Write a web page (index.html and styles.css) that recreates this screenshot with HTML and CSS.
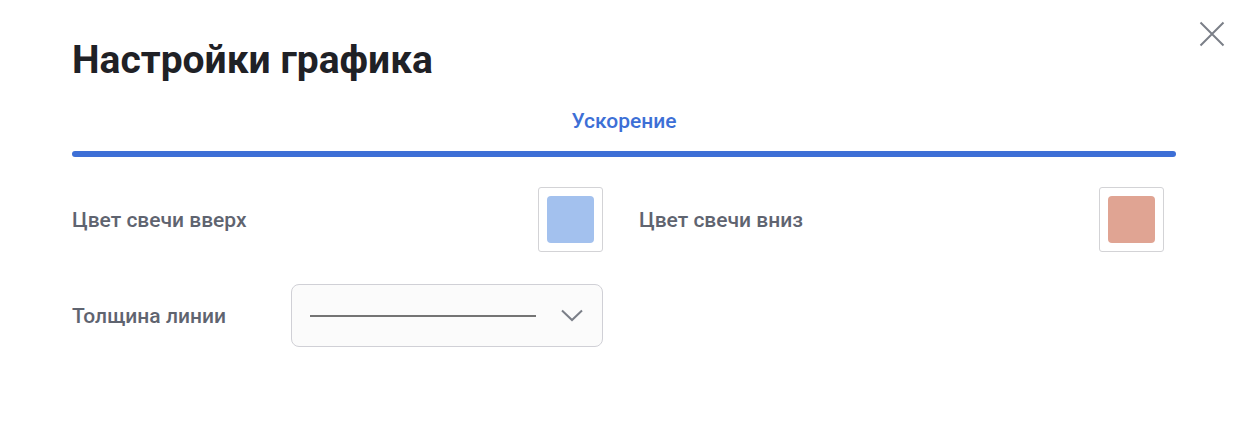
FILE: index.html
```html
<!DOCTYPE html>
<html lang="ru">
<head>
<meta charset="utf-8">
<link rel="stylesheet" href="styles.css">
</head>
<body>
<div class="modal">
  <button class="close" aria-label="Закрыть">
    <svg width="26" height="26" viewBox="0 0 26 26"><path d="M1.5 1.5 L24.5 24.5 M24.5 1.5 L1.5 24.5" stroke="#7b7f88" stroke-width="2" fill="none"/></svg>
  </button>
  <h1 class="title">Настройки графика</h1>
  <div class="tabs">
    <div class="tab">Ускорение</div>
    <div class="tab-bar"></div>
  </div>
  <div class="grid">
    <div class="field">
      <span class="label">Цвет свечи вверх</span>
      <div class="swatch-box"><div class="swatch up"></div></div>
    </div>
    <div class="field">
      <span class="label">Цвет свечи вниз</span>
      <div class="swatch-box"><div class="swatch down"></div></div>
    </div>
    <div class="field field-select">
      <span class="label">Толщина линии</span>
      <div class="select">
        <div class="line-sample"></div>
        <svg class="chev" width="22" height="13" viewBox="0 0 22 13"><path d="M1 1.5 L11 11 L21 1.5" stroke="#7b7f88" stroke-width="2" fill="none"/></svg>
      </div>
    </div>
  </div>
</div>
</body>
</html>
```
FILE: styles.css
```css
* { box-sizing: border-box; }
html, body { margin: 0; padding: 0; background: #fff; }
body { font-family: Roboto, "Noto Sans", Arial, sans-serif; width: 1248px; height: 442px; overflow: hidden; }
.modal { position: relative; padding: 34px 72px 0 72px; }
.close { position: absolute; top: 21px; right: 23px; background: none; border: 0; padding: 0; width: 26px; height: 26px; cursor: pointer; }
.close svg { display: block; }
.title { margin: 0; font-size: 39px; line-height: 52px; font-weight: 700; color: #1f2126; }
.tabs { margin-top: 21px; }
.tab { text-align: center; font-size: 21px; font-weight: 500; line-height: 28px; color: #3d6fd6; }
.tab-bar { margin-top: 16px; height: 6px; border-radius: 3px; background: #3d6fd6; }
.grid { display: grid; grid-template-columns: 531px 525px; column-gap: 36px; row-gap: 32px; margin-top: 30px; }
.field { display: flex; align-items: center; justify-content: space-between; }
.label { font-size: 21px; font-weight: 500; color: #5f6470; }
.swatch-box { width: 65px; height: 65px; border: 1px solid #d3d3d6; border-radius: 3px; padding: 8px; }
.swatch { width: 100%; height: 100%; border-radius: 4px; }
.swatch.up { background: #a3c1ee; }
.swatch.down { background: #e0a493; }
.field-select { justify-content: flex-start; }
.field-select .label { width: 219px; }
.select { width: 312px; height: 63px; border: 1px solid #d0d0d6; border-radius: 8px; background: #fbfbfb; display: flex; align-items: center; padding: 0 19px 0 18px; }
.line-sample { width: 226px; height: 2px; background: #747474; }
.chev { margin-left: auto; display: block; }
```
